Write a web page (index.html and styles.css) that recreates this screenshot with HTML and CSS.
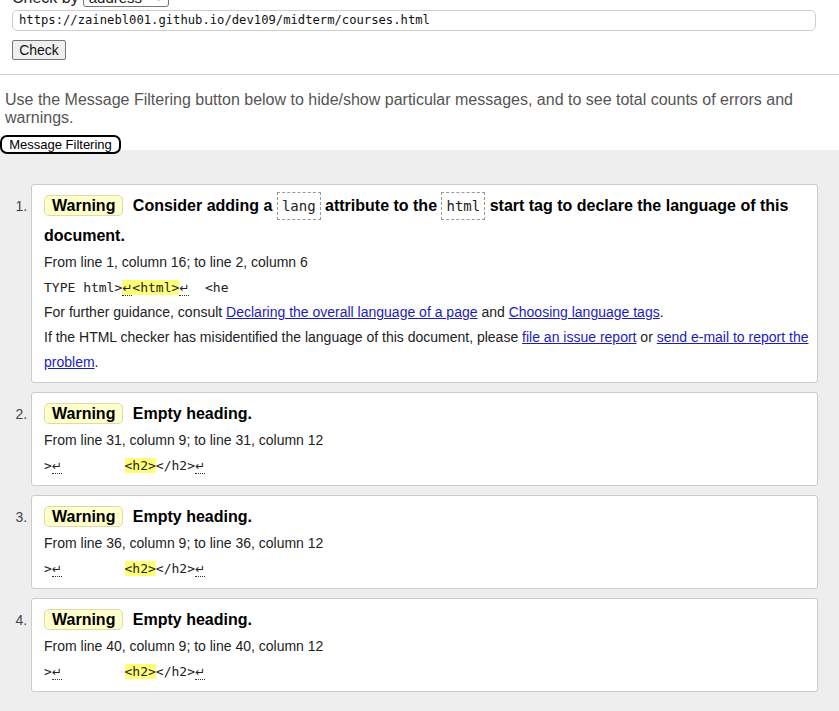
FILE: index.html
```html
<!DOCTYPE html>
<html lang="en">
<head>
<meta charset="utf-8">
<title>Nu Html Checker</title>
<link rel="stylesheet" href="styles.css">
</head>
<body>
<form class="checker">
  <div class="checkby">Check by <span class="select">address <span class="caret">&#9662;</span></span></div>
  <div class="url">https://zainebl001.github.io/dev109/midterm/courses.html</div>
  <button type="button" class="check">Check</button>
</form>
<div class="rule"></div>
<p class="intro">Use the Message Filtering button below to hide/show particular messages, and to see total counts of errors and warnings.</p>
<div class="filter-row"><button type="button" class="filter">Message Filtering</button></div>
<section class="results">
  <ol class="messages">
    <li class="msg">
      <p class="head"><span class="badge">Warning</span> Consider adding a <code class="attr">lang</code> attribute to the <code class="attr">html</code> start tag to declare the language of this document.</p>
      <p class="loc">From line 1, column 16; to line 2, column 6</p>
      <p class="extract">TYPE html&gt;<mark><span class="lf">↵</span>&lt;html&gt;</mark><span class="lf">↵</span>  &lt;he</p>
      <p class="info">For further guidance, consult <a href="#">Declaring the overall language of a page</a> and <a href="#">Choosing language tags</a>.</p>
      <p class="info">If the HTML checker has misidentified the language of this document, please <a href="#">file an issue report</a> or <a href="#">send e-mail to report the problem</a>.</p>
    </li>
    <li class="msg">
      <p class="head"><span class="badge">Warning</span> Empty heading.</p>
      <p class="loc">From line 31, column 9; to line 31, column 12</p>
      <p class="extract">&gt;<span class="lf">↵</span>        <mark>&lt;h2&gt;</mark>&lt;/h2&gt;<span class="lf">↵</span></p>
    </li>
    <li class="msg">
      <p class="head"><span class="badge">Warning</span> Empty heading.</p>
      <p class="loc">From line 36, column 9; to line 36, column 12</p>
      <p class="extract">&gt;<span class="lf">↵</span>        <mark>&lt;h2&gt;</mark>&lt;/h2&gt;<span class="lf">↵</span></p>
    </li>
    <li class="msg">
      <p class="head"><span class="badge">Warning</span> Empty heading.</p>
      <p class="loc">From line 40, column 9; to line 40, column 12</p>
      <p class="extract">&gt;<span class="lf">↵</span>        <mark>&lt;h2&gt;</mark>&lt;/h2&gt;<span class="lf">↵</span></p>
    </li>
  </ol>
</section>
</body>
</html>
```
FILE: styles.css
```css
html, body {
  margin: 0;
  padding: 0;
  background: #eee;
}
body {
  font-family: "Liberation Sans", Arial, sans-serif;
  color: #222;
  background: linear-gradient(#fff 0, #fff 150px, #eee 150px);
  min-height: 711px;
}
.checker {
  padding: 0 12px;
  margin: 0;
}
.checkby {
  margin-top: -12px;
  height: 19px;
  display: flex;
  align-items: center;
  font-size: 16px;
  color: #222;
  gap: 4px;
}
.select {
  display: inline-flex;
  align-items: center;
  box-sizing: border-box;
  width: 86px;
  height: 19px;
  border: 1px solid #767676;
  border-radius: 3px;
  padding: 0 6px 0 5px;
  font-size: 15px;
  justify-content: space-between;
  background: #fff;
}
.caret {
  font-size: 11px;
}
.url {
  box-sizing: border-box;
  margin-top: 3px;
  width: 804px;
  height: 21px;
  border: 1px solid #cfcfcf;
  border-radius: 5px;
  padding: 0 6px;
  font-family: "DejaVu Sans Mono", "Liberation Mono", monospace;
  font-size: 12.2px;
  line-height: 19px;
  color: #111;
  background: #fff;
}
.check {
  display: block;
  box-sizing: border-box;
  margin-top: 9px;
  height: 20px;
  width: 54px;
  padding: 0;
  font-family: "Liberation Sans", Arial, sans-serif;
  font-size: 14px;
  color: #111;
  background: #efefef;
  border: 1px solid #767676;
  border-radius: 2px;
}
.rule {
  margin-top: 14px;
  border-top: 1px solid #cfcfcf;
}
.intro {
  margin: 16px 0 0;
  padding: 0 8px 0 5px;
  font-size: 16px;
  line-height: 18px;
  color: #555;
}
.filter-row {
  margin-top: 8px;
  height: 14px;
}
.filter {
  box-sizing: border-box;
  height: 19px;
  width: 121px;
  padding: 0;
  margin: 0;
  font-family: "Liberation Sans", Arial, sans-serif;
  font-size: 13px;
  line-height: 15px;
  color: #000;
  background: #fff;
  border: 2px solid #000;
  border-radius: 7px;
  vertical-align: top;
}
.results {
  padding: 35px 21px 20px 0;
}
.messages {
  margin: 0;
  padding: 0 0 0 31px;
}
.msg {
  font-size: 14px;
  color: #444;
  background: #fff;
  border: 1px solid #ccc;
  border-radius: 3px;
  padding: 6px 8px 7px 12px;
  margin-bottom: 9px;
}
.msg p {
  margin: 0;
  color: #222;
}
.head {
  font-size: 16px;
  font-weight: bold;
  line-height: 29px;
  color: #000 !important;
}
.badge {
  display: inline-block;
  line-height: 19px;
  padding: 0 7px;
  margin-right: 5px;
  background: #ffffcc;
  border: 1px solid #ddd9a8;
  border-radius: 5px;
  color: #000;
}
.attr {
  font-family: "DejaVu Sans Mono", "Liberation Mono", monospace;
  font-size: 14px;
  font-weight: normal;
  padding: 5px 4px;
  border: 1px dashed #999;
  color: #222;
}
.loc, .info {
  line-height: 25px;
}
.extract {
  font-family: "DejaVu Sans Mono", "Liberation Mono", monospace;
  font-size: 13px;
  line-height: 25px;
  height: 25px;
  white-space: pre;
}
mark {
  background: #ffff77;
  color: inherit;
}
.lf {
  font-family: "DejaVu Sans", sans-serif;
  font-size: 12px;
  line-height: 12px;
  border-bottom: 1px dotted #333;
}
a {
  color: #1c1cbd;
  text-decoration: underline;
}
```
